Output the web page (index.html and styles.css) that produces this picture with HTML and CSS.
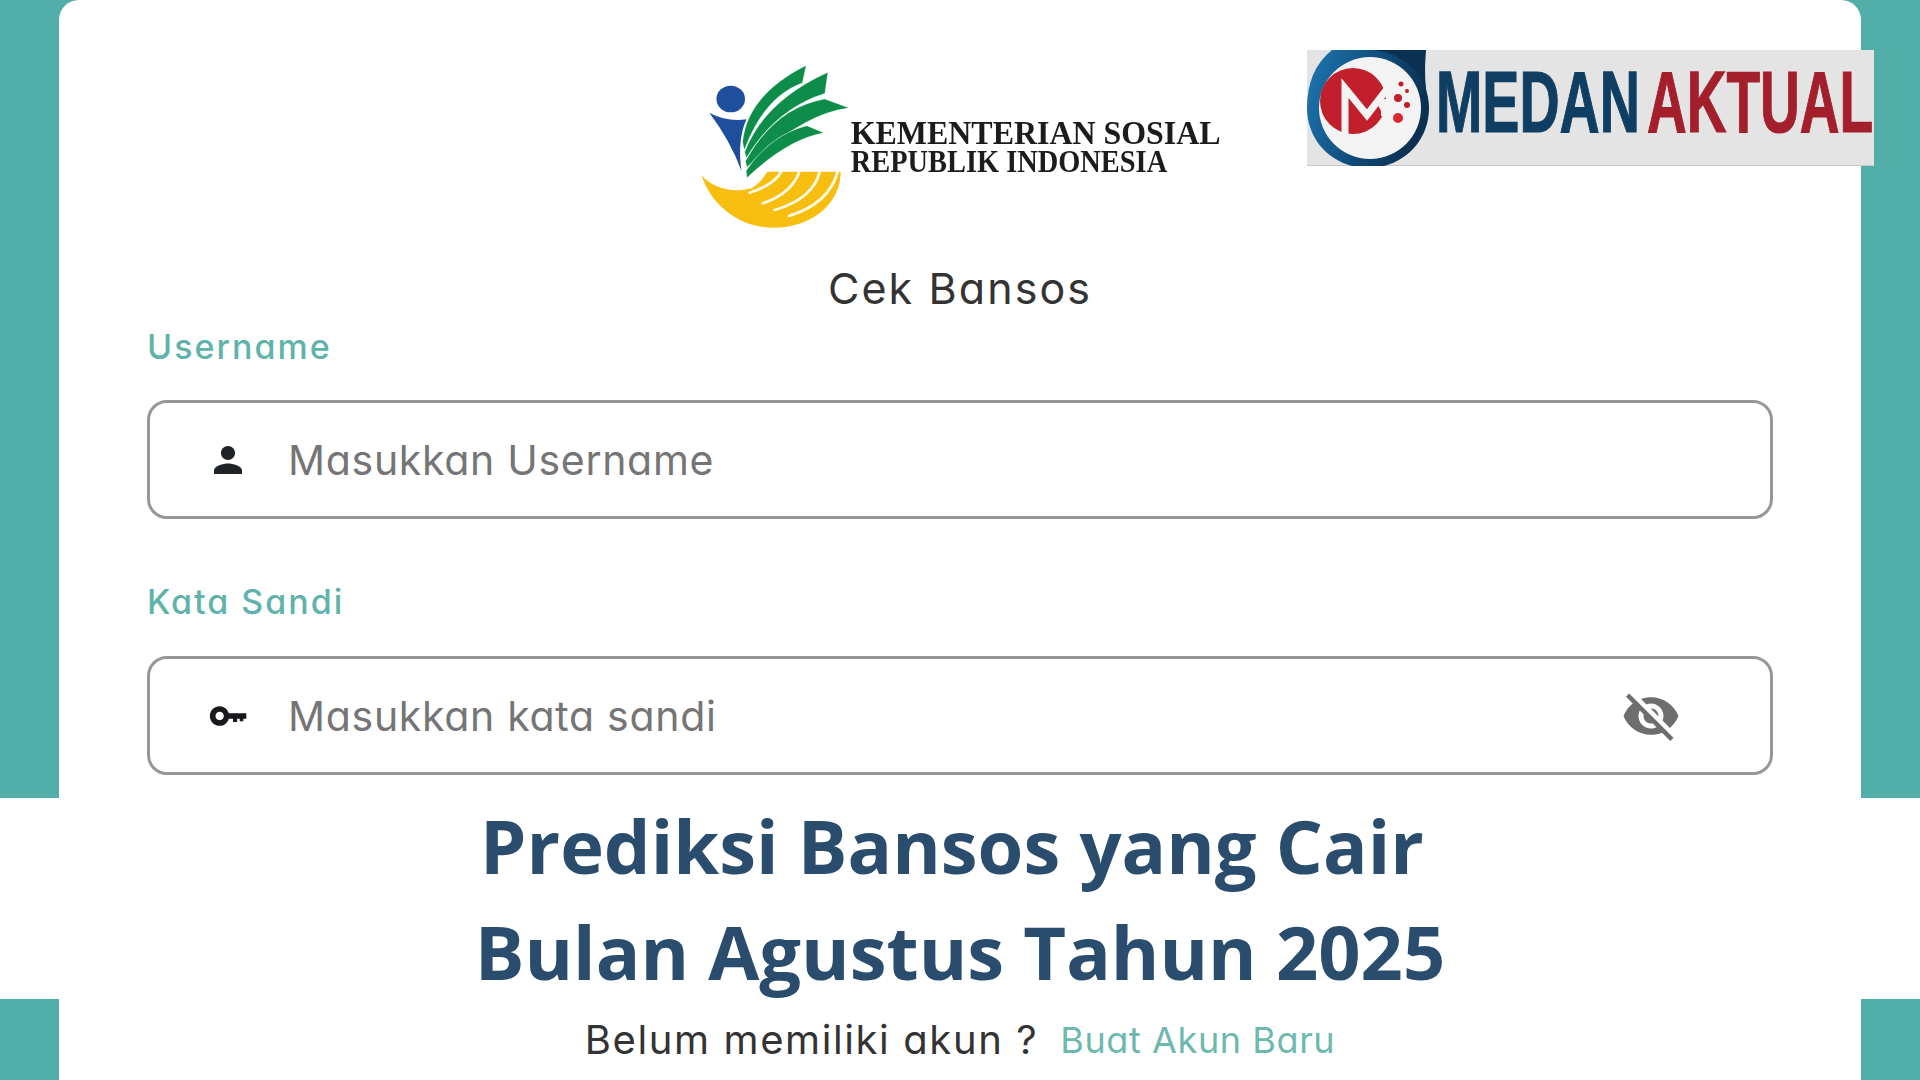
FILE: index.html
```html
<!DOCTYPE html>
<html lang="id">
<head>
<meta charset="utf-8">
<title>Prediksi Bansos yang Cair Bulan Agustus Tahun 2025</title>
<link rel="stylesheet" href="styles.css">
</head>
<body>
<main class="page">
  <section class="top">
    <div class="card card-top">
      <svg class="logo-kemensos" viewBox="0 0 1568 630" preserveAspectRatio="none" role="img" aria-label="Kementerian Sosial Republik Indonesia">
        <circle cx="142" cy="177" r="40" fill="#1E4E9C"/>
        <path d="M82 218 Q130 246 186 238 Q160 300 172 392 Q140 300 82 218Z" fill="#1E4E9C"/>
        <g fill="#0E8C4A" stroke="#CDEFDB" stroke-width="3" paint-order="stroke">
          <path d="M176 305 Q190 165 352 78 L342 128 Q235 170 180 328Z"/>
          <path d="M182 336 Q235 185 413 98 L405 160 Q270 205 186 352Z"/>
          <path d="M184 364 Q265 205 405 178 Q435 190 470 203 Q340 222 188 380Z"/>
          <path d="M186 392 Q255 285 355 258 L400 278 Q300 298 188 412Z"/>
        </g>
        <path d="M60 405 C90 445 150 460 200 445 C225 430 235 410 245 395 L450 395 C450 490 370 565 255 563 C160 560 85 490 60 405Z" fill="#F7BE10"/>
        <g fill="none" stroke="#FFFBE6" stroke-width="8" stroke-linecap="round">
          <path d="M285 392 Q265 435 195 458"/>
          <path d="M335 392 Q315 460 232 490"/>
          <path d="M392 392 Q375 475 265 510"/>
          <path d="M442 392 Q420 490 305 528"/>
        </g>
        <text class="kem-a" transform="translate(478 312) scale(0.877 1)">KEMENTERIAN SOSIAL</text>
        <text class="kem-b" transform="translate(478 395) scale(0.865 1)">REPUBLIK INDONESIA</text>
      </svg>
      <svg class="logo-medan" viewBox="0 0 567 116" role="img" aria-label="Medan Aktual">
        <defs>
          <linearGradient id="ring" x1="0" y1="0" x2="1" y2="0.3">
            <stop offset="0" stop-color="#1F78B4"/>
            <stop offset="0.6" stop-color="#0F4A78"/>
            <stop offset="1" stop-color="#0B3152"/>
          </linearGradient>
        </defs>
        <rect width="567" height="116" fill="#E4E4E4"/>
        <rect y="115" width="567" height="1" fill="#C8C8C8"/>
        <path d="M61 0H119Q116 30 122 58H61Z" fill="#0B3152"/>
        <path d="M61 0H25Q0 20 0 58C0 92 27 118 61 118C95 118 122 92 122 58C122 26 95 0 61 0Z" fill="url(#ring)"/>
        <circle cx="63" cy="58" r="51" fill="#F3F3F3"/>
        <circle cx="46" cy="51" r="33" fill="#C11F2B"/>
        <path d="M38 90V38L60 65L84 34" fill="none" stroke="#F3F3F3" stroke-width="7"/>
        <path d="M68 49H84V66H74V61Z" fill="#F3F3F3"/>
        <circle cx="94" cy="34" r="2.5" fill="#C11F2B"/>
        <circle cx="91" cy="48" r="4" fill="#C11F2B"/>
        <circle cx="100" cy="55" r="3" fill="#C11F2B"/>
        <circle cx="91" cy="68" r="5" fill="#D9282F"/>
        <circle cx="100" cy="41" r="2" fill="#C11F2B"/>
        <text class="med-a" transform="translate(129 82) scale(0.632 1)">MEDAN</text>
        <text class="med-b" transform="translate(340 82) scale(0.625 1)">AKTUAL</text>
      </svg>
      <h2 class="form-title">Cek Bansos</h2>
      <label class="field-label label-user">Username</label>
      <div class="input">
        <span class="icon-slot">
          <svg class="icon icon-person" viewBox="0 0 24 24"><path d="M12 12c2.21 0 4-1.79 4-4s-1.79-4-4-4-4 1.79-4 4 1.79 4 4 4zm0 2c-2.67 0-8 1.34-8 4v2h16v-2c0-2.66-5.33-4-8-4z"/></svg>
        </span>
        <span class="placeholder">Masukkan Username</span>
      </div>
      <label class="field-label label-pass">Kata Sandi</label>
      <div class="input">
        <span class="icon-slot">
          <svg class="icon icon-key" viewBox="0 0 24 24"><path d="M12.5 10.4C11.7 7.9 9.6 6.1 7 6.1 3.7 6.1 1.1 8.7 1.1 12s2.6 5.9 5.9 5.9c2.6 0 4.7-1.8 5.5-4.3H15v2h2.5v-2H19v1.5h2.2v-1.5H23v-3.2zM7 14.5c-1.4 0-2.5-1.1-2.5-2.5S5.6 9.500 7 9.500s2.500 1.100 2.500 2.500-1.100 2.500-2.500 2.500z"/></svg>
        </span>
        <span class="placeholder">Masukkan kata sandi</span>
        <svg class="icon icon-eye" viewBox="0 0 24 24"><path d="M12 7c2.76 0 5 2.24 5 5 0 .65-.13 1.26-.36 1.83l2.92 2.92c1.51-1.26 2.7-2.89 3.43-4.75-1.73-4.39-6-7.5-11-7.5-1.4 0-2.74.25-3.98.7l2.16 2.16C10.74 7.13 11.35 7 12 7zM2 4.27l2.28 2.28.46.46C3.08 8.3 1.78 10.02 1 12c1.73 4.39 6 7.5 11 7.5 1.55 0 3.03-.3 4.38-.84l.42.42L19.73 22 21 20.73 3.27 3 2 4.27zM7.53 9.8l1.55 1.55c-.05.21-.08.43-.08.65 0 1.66 1.34 3 3 3 .22 0 .44-.03.65-.08l1.55 1.55c-.67.33-1.41.53-2.2.53-2.76 0-5-2.24-5-5 0-.79.2-1.53.53-2.2zm4.31-.78l3.15 3.15.02-.16c0-1.66-1.34-3-3-3l-.17.01z"/></svg>
      </div>
    </div>
  </section>
  <section class="band">
    <h1 class="headline">
      <span class="line line-one">Prediksi Bansos yang Cair</span>
      <span class="line line-two">Bulan Agustus Tahun 2025</span>
    </h1>
  </section>
  <section class="bottom">
    <div class="card card-bottom">
      <span class="ask">Belum memiliki akun ?</span>
      <span class="signup">Buat Akun Baru</span>
    </div>
  </section>
</main>
</body>
</html>
```

FILE: styles.css
```css
* { box-sizing: border-box; }
html, body { margin: 0; height: 100%; }
body { overflow: hidden; background: #fff; }

.page {
  display: flex;
  flex-direction: column;
  width: 1920px;
  height: 1080px;
  font-family: "Inter", "Noto Sans", sans-serif;
  font-feature-settings: "cv11" 1;
}

.top { height: 798px; padding: 0 59px; background: #52AEA8; }
.bottom { flex: 1; padding: 0 59px; background: #52AEA8; }

.card { background: #fff; height: 100%; }
.card-top {
  position: relative;
  display: flex;
  flex-direction: column;
  padding: 0 88px;
  border-radius: 20px 20px 0 0;
}
.card-bottom { display: flex; align-items: center; justify-content: center; gap: 22px; }

.logo-kemensos { display: block; align-self: center; width: 560px; height: 210px; margin-top: 40px; filter: blur(0.5px); }
.kem-a, .kem-b { font-family: "Liberation Serif", serif; font-weight: 700; fill: #1c1c1c; }
.kem-a { font-size: 102px; }
.kem-b { font-size: 92px; }

.logo-medan { position: absolute; top: 50px; left: 1248px; width: 567px; height: 116px; filter: blur(0.7px); }
.med-a, .med-b { font-family: "Liberation Sans", sans-serif; font-weight: 700; font-size: 88px; stroke-width: 1.2px; paint-order: stroke; }
.med-a { fill: #0F3E62; stroke: #0F3E62; }
.med-b { fill: #A31F2B; stroke: #A31F2B; }

.form-title {
  margin: 14px 0 0;
  height: 48px;
  font-size: 43px;
  line-height: 48px;
  font-weight: 400;
  letter-spacing: 2.1px;
  text-align: center;
  color: #333;
}

.field-label { display: block; height: 40px; font-size: 34px; line-height: 40px; font-weight: 500; letter-spacing: 2px; color: #5FB3AB; }
.label-user { margin-top: 15px; margin-bottom: 33px; }
.label-pass { margin-top: 63px; margin-bottom: 34px; }

.input {
  display: flex;
  align-items: center;
  height: 119px;
  flex: none;
  border: 3px solid #979797;
  border-radius: 20px;
}
.icon-slot { display: flex; justify-content: center; width: 42px; margin: 0 39px 0 57px; }
.icon { display: block; flex: none; }
.icon-person { width: 42px; height: 42px; fill: #1f2328; }
.icon-key { width: 40px; height: 40px; fill: #17191c; }
.icon-eye { width: 60px; height: 60px; margin: 0 89px 0 auto; fill: #6e6e6e; }

.placeholder { font-size: 41px; font-weight: 400; letter-spacing: 0.7px; color: #757575; }

.band { display: flex; align-items: center; justify-content: center; height: 201px; background: #fff; }
.headline { margin: 0; font-family: "Open Sans", "Noto Sans", sans-serif; font-feature-settings: normal; font-size: 74px; line-height: 106px; font-weight: 700; color: #2A4D6E; text-align: center; }
.line { display: block; }
.line-one { margin-right: 16px; }

.ask { font-size: 40px; letter-spacing: 1.6px; color: #333; }
.signup { font-size: 36px; letter-spacing: 0.6px; color: #6DB8AF; }
```
